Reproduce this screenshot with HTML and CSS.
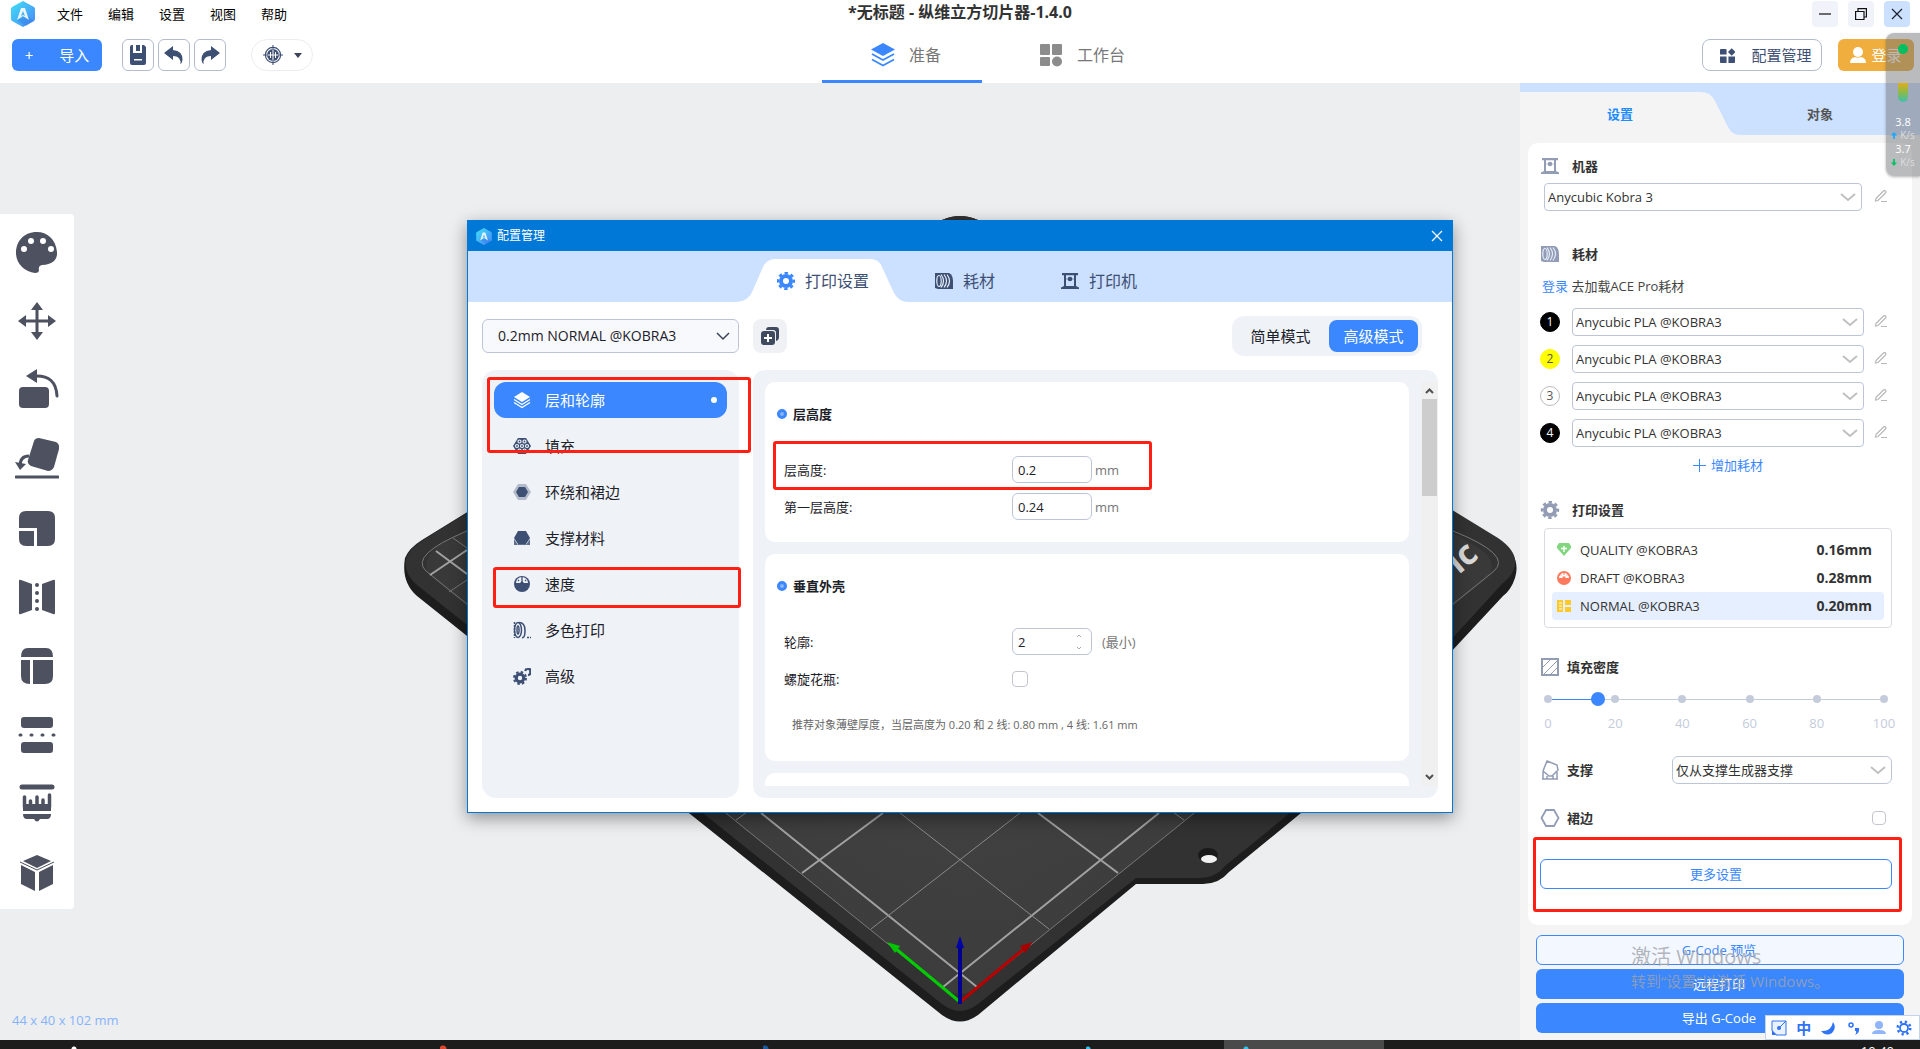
FILE: index.html
```html
<!DOCTYPE html>
<html lang="zh-CN">

<head>
    <meta charset="UTF-8" />
    <meta name="viewport" content="width=device-width, initial-scale=1.0" />
    <title>*无标题 - 纵维立方切片器-1.4.0</title>
    <link rel="stylesheet" href="styles.css">
</head>

<body>
    <!-- shared icons -->
    <svg class="sprite" aria-hidden="true">
        <defs>
            <linearGradient id="logoFill" x1="0" y1="0" x2="1" y2="1">
                <stop offset="0" stop-color="#3fe0f5" />
                <stop offset="1" stop-color="#4a86f7" />
            </linearGradient>
        </defs>
        <symbol id="i-logo" viewBox="0 0 24 26">
            <path d="M12 0l11 6q1 1 1 2v10q0 1-1 2l-11 6-11-6q-1-1-1-2V8q0-1 1-2z" fill="url(#logoFill)" />
            <path d="M16 15l7 5-8 5-9-6z" fill="#2f6fe0" opacity=".35" />
            <path d="M10 7h4l4 12-6-4-6 4z" fill="#e8f4ff" />
            <path d="M12 10l2 5-2-1-2 1z" fill="#43b4f0" />
        </symbol>
        <symbol id="i-gear" viewBox="0 0 18 18">
            <g fill="none" stroke="currentColor">
                <circle cx="9" cy="9" r="5" stroke-width="4" />
                <circle cx="9" cy="9" r="8" stroke-width="2.4" stroke-dasharray="3.4 2.883" stroke-dashoffset="1.7" />
            </g>
        </symbol>
        <symbol id="i-spool" viewBox="0 0 18 16">
            <path d="M0 0h14q4 2 4 8v8H3L0 15z" fill="currentColor" />
            <g fill="none" stroke="#e6eefc" stroke-width="1.200">
                <ellipse cx="4" cy="8" rx="2.200" ry="5.500" />
                <path d="M6 1.500q5 6.500 0 13M9 1.500q5 6.500 0 13M12 1.500q5 6.500 0 13" />
            </g>
        </symbol>
        <symbol id="i-machine" viewBox="0 0 18 16">
            <path d="M1 0h16v2.200h-2V13l3 1.500V16H0v-1.500L3 13V2.200H1zM5 2.200V13h8V2.200z" fill="currentColor" fill-rule="evenodd" />
            <path d="M5 6h8" stroke="currentColor" opacity=".5" />
            <circle cx="9" cy="6" r="2.300" fill="currentColor" />
        </symbol>
        <symbol id="i-edit" viewBox="0 0 14 14">
            <path d="M2 8.500L9.500 1q1-1 2 0t0 2L4 10.500l-2.500.5zM7 11.500h6" fill="none" stroke="currentColor" stroke-width="1.200" />
        </symbol>
        <symbol id="i-layers" viewBox="0 0 24 24">
            <path d="M12 0l12 6.500L12 13 0 6.500z" fill="currentColor" />
            <path d="M1 11l11 6 11-6M1 16.500l11 6 11-6" fill="none" stroke="currentColor" stroke-width="1.800" />
        </symbol>
        <symbol id="i-close" viewBox="0 0 12 12">
            <path d="M1 1l10 10M11 1L1 11" stroke="currentColor" stroke-width="1.200" />
        </symbol>
    </svg>

    <header class="header">
        <div class="titlebar">
            <nav class="menu">
                <svg class="app-logo"><use href="#i-logo" /></svg>
                <button>文件</button>
                <button>编辑</button>
                <button>设置</button>
                <button>视图</button>
                <button>帮助</button>
            </nav>
            <h1>*无标题 - 纵维立方切片器-1.4.0</h1>
            <div class="window-buttons">
                <button aria-label="最小化"><svg viewBox="0 0 12 12"><path d="M0 6h12" stroke="#111" stroke-width="1.200" /></svg></button>
                <button aria-label="还原"><svg viewBox="0 0 12 12"><path d="M.6 3.500h8.400v8H.6zM3 3.500V.6h8.400V9H9" fill="none" stroke="#111" stroke-width="1.200" /></svg></button>
                <button class="close" aria-label="关闭"><svg><use href="#i-close" /></svg></button>
            </div>
        </div>

        <div class="toolbar">
            <div class="tools">
                <button class="import"><span>+</span>导入</button>
                <div class="tool-group">
                    <button class="tool" aria-label="保存">
                        <svg viewBox="0 0 18 20"><path d="M1 2q0-2 2-2h1v8h9V0h2l2 2v16q0 2-2 2H3q-2 0-2-2zM7 0h4v6H7zM5 14v1.500h8V14z" fill="currentColor" fill-rule="evenodd" /></svg>
                    </button>
                    <button class="tool" aria-label="撤销">
                        <svg viewBox="0 0 20 18"><path d="M0 7L9 0v4q10 1 9.500 10-.5 3-2 4 .5-8-7.500-8v4z" fill="currentColor" /></svg>
                    </button>
                    <button class="tool" aria-label="重做">
                        <svg viewBox="0 0 20 18"><path d="M20 7L11 0v4Q1 5 1.500 14q.5 3 2 4-.5-8 7.500-8v4z" fill="currentColor" /></svg>
                    </button>
                </div>
                <button class="target" aria-label="视角">
                    <svg class="target-icon" viewBox="0 0 20 20">
                        <g fill="none" stroke="#3d4f73">
                            <circle cx="10" cy="10" r="7.600" stroke-width="1.200" />
                            <path d="M10 0v20M0 10h20" stroke-width="1" />
                        </g>
                        <circle cx="10" cy="10" r="6" fill="#3d4f73" />
                        <path d="M10 4.500v11M4.500 10h11M7.500 7v6M12.500 7v6" stroke="#fff" stroke-width="1" />
                    </svg>
                    <svg class="caret" viewBox="0 0 8 5"><path d="M0 0h8L4 5z" fill="#3d4458" /></svg>
                </button>
            </div>

            <nav class="main-tabs">
                <button class="main-tab active"><svg><use href="#i-layers" /></svg>准备</button>
                <button class="main-tab">
                    <svg viewBox="0 0 24 24"><path d="M2 1h8q1 0 1 1v9q0 1-1 1H2q-1 0-1-1V2q0-1 1-1zM14 1h8q1 0 1 1v9q0 1-1 1h-8q-1 0-1-1V2q0-1 1-1zM2 14h8q1 0 1 1v7q0 1-1 1H2q-1 0-1-1v-7q0-1 1-1z" fill="currentColor" /><circle cx="18" cy="18.500" r="5" fill="currentColor" /></svg>工作台
                </button>
            </nav>

            <div class="account">
                <button class="config">
                    <svg viewBox="0 0 16 16"><path d="M0 1.500Q0 1 1 1h5q1 0 1 1v5H0zM0 9h7v7H1q-1 0-1-1zM9 9h7v6q0 1-1 1H9zM12.500.2l4 4-4 4-4-4z" fill="currentColor" /></svg>配置管理
                </button>
                <button class="login">
                    <svg viewBox="0 0 16 16"><circle cx="8" cy="5" r="5" fill="#fff" /><path d="M0 16q0-5 5-6 3 1.500 6 0 5 1 5 6z" fill="#fff" /></svg>登录
                </button>
            </div>
        </div>
    </header>

    <main class="workspace">
        <svg class="scene" viewBox="0 83 1920 957" aria-hidden="true">
            <defs>
                <radialGradient id="bed" cx="960" cy="700" r="420" gradientUnits="userSpaceOnUse">
                    <stop offset="0" stop-color="#434343" />
                    <stop offset="1" stop-color="#393939" />
                </radialGradient>
            </defs>
            <path d="M942 220q18-8 36 0l520 320q24 16 17 38-4 12-12 18L1301 813l-72 59q-10 12-26 12h-67L978 1015q-18 13-36 0L417 596q-16-14-12-38 4-10 17-18z" fill="#1d1d1d" />
            <path d="M942 220q18-8 36 0l520 318q22 15 16 31-3 8-12 15L1301 804l-76 62q-9 12-26 12h-63L978 1004q-18 14-36 0L417 585q-14-12-11-27 4-10 17-18z" fill="#323232" />
            <path d="M960 240l520 309q16 10 10 27l-510 410q-20 16-40 0L430 576q-10-16 8-30z" fill="url(#bed)" />
            <g fill="none" stroke="#a2a2a2">
                <path d="M467 531q-58 24-41 40l514 415M1453 531q60 24 41 40l-514 415" stroke="#777" />
                <path d="M761 813l216 174M1159 813L943 987M802 873l81-60M1118 873l-80-60" stroke-width="2" />
                <path d="M900 813l149 116M1020 813L871 929M736 820l14-10M1184 820l-14-10" stroke="#8a8a8a" />
                <path d="M436 551l31 23M430 575l37-25" stroke-width="2" />
                <path d="M449 592l18-12M453 538l14 10" stroke="#777" />
            </g>
            <text class="bed-logo" transform="translate(1480 557) rotate(-40)" text-anchor="end">ic</text>
            <ellipse cx="1208" cy="855" rx="10" ry="7" fill="#191919" />
            <ellipse cx="1209" cy="859" rx="8" ry="4" fill="#f1f1f1" />
            <g stroke-width="3" fill="none">
                <path d="M960 1002l-65-54" stroke="#0c0" />
                <path d="M960 1002l65-54" stroke="#b80000" />
                <path d="M960 1004v-60" stroke="#000090" stroke-width="4" />
            </g>
            <path d="M887 942l13 4-5 7z" fill="#00c400" />
            <path d="M1033 942l-13 4 5 7z" fill="#a80000" />
            <path d="M960 936l4 12h-8z" fill="#0000a8" />
        </svg>

        <aside class="side-tools">
            <button aria-label="颜色"><svg viewBox="0 0 44 44"><path d="M22 2C8 2 1 12 1 23s9 19 19 20q4 0 4-3-1-4 3-5 16-1 15-13C41 9 32 2 22 2z" fill="currentColor" /><g fill="#fff"><circle cx="9" cy="19" r="3" /><circle cx="16" cy="11" r="3" /><circle cx="28" cy="11" r="3" /><circle cx="36" cy="19" r="3" /></g></svg></button>
            <button aria-label="移动"><svg viewBox="0 0 44 44"><path d="M22 3l6 8h-4.500v9.500H33V16l8 6-8 6v-4.500h-9.500V33H28l-6 8-6-8h4.500v-9.500H11V28l-8-6 8-6v4.500h9.500V11H16z" fill="currentColor" /></svg></button>
            <button aria-label="旋转"><svg viewBox="0 0 44 44"><rect x="4" y="19" width="30" height="21" rx="4" fill="currentColor" /><path d="M20 8q21-1 22 20" fill="none" stroke="currentColor" stroke-width="3" stroke-linecap="round" /><path d="M11 8l11-7v14z" fill="currentColor" /></svg></button>
            <button aria-label="放平"><svg viewBox="0 0 44 44"><path d="M19 4q1-3 5-3l17 4q4 2 3 7l-5 18q-2 4-6 4l-17-5q-4-2-3-6z" fill="currentColor" /><path d="M14 19q-9 0-9 10" fill="none" stroke="currentColor" stroke-width="3" /><path d="M0 25l11 2-6 6z" fill="currentColor" /><path d="M1 40h42" stroke="currentColor" stroke-width="3" stroke-linecap="round" /></svg></button>
            <button aria-label="缩放"><svg viewBox="0 0 44 44"><path d="M11 5h22q7 0 7 7v21q0 7-7 7H22V22H4V12q0-7 7-7zM4 25h15v15h-8q-7 0-7-7z" fill="currentColor" /></svg></button>
            <button aria-label="镜像"><svg viewBox="0 0 44 44"><path d="M4 6q0-2 2-1l11 4v26L6 39q-2 1-2-1zM40 6q0-2-2-1L27 9v26l11 4q2 1 2-1z" fill="currentColor" /><path d="M22 10v26" stroke="currentColor" stroke-width="4" stroke-dasharray="0 8" stroke-linecap="round" /></svg></button>
            <button aria-label="布局"><svg viewBox="0 0 44 44"><path d="M13 4h18q7 0 7 9H6q0-9 7-9zM6 16h9v24q-9 0-9-8zM18 16h20v16q0 8-8 8H18z" fill="currentColor" /></svg></button>
            <button aria-label="切割"><svg viewBox="0 0 44 44"><rect x="6" y="4" width="32" height="11" rx="3" fill="currentColor" /><rect x="6" y="29" width="32" height="11" rx="3" fill="currentColor" /><path d="M5 22h36" stroke="currentColor" stroke-width="3" stroke-linecap="round" stroke-dasharray="1 10" /></svg></button>
            <button aria-label="支撑绘制"><svg viewBox="0 0 44 44"><path d="M7 5h30" stroke="currentColor" stroke-width="5" stroke-linecap="round" /><path d="M9.500 15v10M15.500 19v6M22 15v10M28 18v7M34.500 13v12" stroke="currentColor" stroke-width="3.500" stroke-linecap="round" /><path d="M8 22h28v7H8zM8 32h28q0 5-4 5h-7q-3 5-6 0h-7q-4 0-4-5z" fill="currentColor" /></svg></button>
            <button aria-label="视图立方体"><svg viewBox="0 0 44 44"><path d="M22 4l14 6-14 7-14-7zM6 14l14 7v19L6 33zM38 14l-14 7v19l14-7z" fill="currentColor" /><path d="M5 11l17 8 17-8" stroke="currentColor" fill="none" /></svg></button>
        </aside>

        <p class="size-label">44 x 40 x 102 mm</p>

        <aside class="panel">
            <div class="panel-tabs">
                <button class="active">设置<svg viewBox="0 0 40 43" preserveAspectRatio="none"><path d="M0 0q11 0 15 9l13 26q4 8 12 8H0z" fill="#f4f4f4" /></svg></button>
                <button>对象</button>
            </div>

            <section class="card">
                <h2><svg class="h-icon"><use href="#i-machine" /></svg>机器</h2>
                <div class="machine-row">
                    <select aria-label="机器"><option>Anycubic Kobra 3</option></select>
                    <button class="edit" aria-label="编辑"><svg><use href="#i-edit" /></svg></button>
                </div>

                <h2 class="filament-title"><svg class="h-icon"><use href="#i-spool" /></svg>耗材</h2>
                <p class="ace"><a href="#">登录</a> 去加载ACE Pro耗材</p>
                <ul class="filaments">
                    <li>
                        <label class="slot black" for="f1">1</label>
                        <select id="f1"><option>Anycubic PLA @KOBRA3</option></select>
                        <button class="edit" aria-label="编辑"><svg><use href="#i-edit" /></svg></button>
                    </li>
                    <li>
                        <label class="slot yellow" for="f2">2</label>
                        <select id="f2"><option>Anycubic PLA @KOBRA3</option></select>
                        <button class="edit" aria-label="编辑"><svg><use href="#i-edit" /></svg></button>
                    </li>
                    <li>
                        <label class="slot" for="f3">3</label>
                        <select id="f3"><option>Anycubic PLA @KOBRA3</option></select>
                        <button class="edit" aria-label="编辑"><svg><use href="#i-edit" /></svg></button>
                    </li>
                    <li>
                        <label class="slot black" for="f4">4</label>
                        <select id="f4"><option>Anycubic PLA @KOBRA3</option></select>
                        <button class="edit" aria-label="编辑"><svg><use href="#i-edit" /></svg></button>
                    </li>
                </ul>
                <div class="add-row">
                    <button class="add"><svg viewBox="0 0 13 13"><path d="M6.500 0v13M0 6.500h13" stroke="currentColor" /></svg>增加耗材</button>
                </div>

                <h2 class="print-title"><svg class="h-icon gear"><use href="#i-gear" /></svg>打印设置</h2>
                <div class="profiles">
                    <button><svg viewBox="0 0 14 14"><path d="M2 0h10l2 3v2l-7 8-7-8V3z" fill="#82d67f" /><path d="M7 3v6M4 5.500h6" stroke="#fff" stroke-width="1.500" /></svg>QUALITY @KOBRA3<b>0.16mm</b></button>
                    <button><svg viewBox="0 0 14 14"><circle cx="7" cy="7" r="7" fill="#ff7a5c" /><path d="M2 7a5 5 0 0 1 10 0H8.500V5.500h-3V7z" fill="#fff" /><path d="M4 3.500v1M10 3.500v1M7 1v3" stroke="#ff7a5c" /></svg>DRAFT @KOBRA3<b>0.28mm</b></button>
                    <button class="active"><svg viewBox="0 0 14 14"><path d="M0 1h6v12H0zM8 1h6v5H8zM8 8h6v5H8z" fill="#ffca28" /><path d="M2 4h3M2 7h3M2 10h3" stroke="#fff" /></svg>NORMAL @KOBRA3<b>0.20mm</b></button>
                </div>

                <h2 class="fill-title tight">
                    <svg class="h-icon gear" viewBox="0 0 18 18"><path d="M1 1h16v16H1z" fill="none" stroke="currentColor" stroke-width="2" /><path d="M2 9l7-7M3 16L16 3M10 16l6-6" stroke="currentColor" /></svg><label for="density">填充密度</label>
                </h2>
                <div class="slider">
                    <div class="ticks"><i></i><i></i><i></i><i></i><i></i><i></i></div>
                    <input type="range" id="density" min="0" max="100" value="15">
                </div>
                <div class="scale"><span>0</span><span>20</span><span>40</span><span>60</span><span>80</span><span>100</span></div>

                <div class="support-row tight">
                    <svg class="h-icon support" viewBox="0 0 18 20"><path d="M6 1l10 4 1 5-6 6H8L2 11zM1 19h16M2 12v7M16 12v7M6 16v3M12 16v3" fill="none" stroke="currentColor" stroke-width="1.500" /></svg>
                    <label for="support">支撑</label>
                    <select id="support"><option>仅从支撑生成器支撑</option></select>
                </div>
                <div class="brim-row tight">
                    <svg class="h-icon gear" viewBox="0 0 18 18"><path d="M5 1h8l4.500 8L13 17H5L.5 9z" fill="none" stroke="currentColor" stroke-width="1.800" /></svg>
                    <label for="brim">裙边</label>
                    <input type="checkbox" id="brim">
                </div>
                <div class="more-row">
                    <button class="more">更多设置</button>
                    <span class="mark mark-more"></span>
                </div>
            </section>

            <div class="actions">
                <button class="outline">G-Code 预览</button>
                <button>远程打印</button>
                <button>导出 G-Code</button>
            </div>

            <div class="watermark">
                <strong>激活 Windows</strong>
                <span>转到“设置”以激活 Windows。</span>
            </div>
        </aside>

        <div class="dialog" role="dialog" aria-labelledby="dialog-title">
            <div class="dialog-title">
                <svg class="dialog-logo"><use href="#i-logo" /></svg>
                <span id="dialog-title">配置管理</span>
                <button aria-label="关闭"><svg><use href="#i-close" /></svg></button>
            </div>
            <nav class="dialog-tabs">
                <button class="active">
                    <svg class="tab-shape" viewBox="0 0 171 43"><path d="M0 43q12-1 16-12l10-23q4-8 12-8h95q9 0 12 8l12 26q5 9 14 9z" fill="#fff" /></svg>
                    <svg class="tab-icon blue"><use href="#i-gear" /></svg><span>打印设置</span>
                </button>
                <button><svg class="tab-icon"><use href="#i-spool" /></svg>耗材</button>
                <button><svg class="tab-icon"><use href="#i-machine" /></svg>打印机</button>
            </nav>

            <div class="dialog-bar">
                <select class="preset" aria-label="配置"><option>0.2mm NORMAL @KOBRA3</option></select>
                <button class="copy" aria-label="复制配置">
                    <svg viewBox="0 0 18 18"><path d="M5 3q0-3 3-3h7q3 0 3 3v7q0 3-3 4V6q0-3-3-3z" fill="#3f4a5f" /><rect y="4" width="14" height="14" rx="3" fill="#3f4a5f" /><path d="M7 7v8M3 11h8" stroke="#fff" stroke-width="2" /></svg>
                </button>
                <div class="mode">
                    <button>简单模式</button>
                    <button class="active">高级模式</button>
                </div>
            </div>

            <div class="dialog-body">
                <nav class="categories">
                    <button class="active"><svg viewBox="0 0 18 18"><path d="M9 1l8 5-8 5-8-5z" fill="currentColor" /><path d="M1 8.500l8 5 8-5M1 11.500l8 5 8-5" fill="none" stroke="currentColor" stroke-width="1.300" /></svg>层和轮廓<i></i></button>
                    <button><svg viewBox="0 0 18 18"><path d="M5 1h8l5 8-5 8H5L0 9z" fill="currentColor" /><g fill="none" stroke="#eff3f8" stroke-width="1.200"><circle cx="6.500" cy="4.500" r="1.500" /><circle cx="11.500" cy="4.500" r="1.500" /><circle cx="4" cy="9" r="1.500" /><circle cx="9" cy="9" r="1.500" /><circle cx="14" cy="9" r="1.500" /><circle cx="6.500" cy="13.500" r="1.500" /><circle cx="11.500" cy="13.500" r="1.500" /></g></svg>填充</button>
                    <button><svg viewBox="0 0 18 18"><path d="M5 1h8l5 8-5 8H5L0 9z" fill="#b4bccb" /><path d="M6 4h6l3 5-3 5H6L3 9z" fill="currentColor" /></svg>环绕和裙边</button>
                    <button><svg viewBox="0 0 18 18"><path d="M5 2h8l4 7-4 6H5L1 9z" fill="currentColor" /><path d="M1 10l4 6H1zM17 10l-4 6h4zM5 14h8v2H5z" fill="currentColor" opacity=".8" /></svg>支撑材料</button>
                    <button><svg viewBox="0 0 18 18"><circle cx="9" cy="9" r="8" fill="currentColor" /><path d="M3 8a6 6 0 0 1 12 0h-4L9 6 7 8z" fill="#eff3f8" /><path d="M9 2v7M5 5l1 1M13 5l-1 1" stroke="currentColor" stroke-width="1.300" /></svg>速度</button>
                    <button><svg viewBox="0 0 18 18"><g fill="none" stroke="currentColor" stroke-width="1.500"><ellipse cx="5" cy="9" rx="3.500" ry="7.500" /><ellipse cx="5" cy="9" rx="1" ry="4" /><path d="M6 1.500q6 0 6 8t-3 7" /><path d="M1.500 1v16M14 16.500h4" stroke-dasharray="2 1" /></g></svg>多色打印</button>
                    <button><svg viewBox="0 0 18 18"><g fill="none" stroke="currentColor"><circle cx="7" cy="11" r="3.800" stroke-width="3.200" /><circle cx="7" cy="11" r="6" stroke-width="2" stroke-dasharray="2.500 2.212" /><path d="M12 4a3 3 0 1 1 3 4" stroke-width="2" /><path d="M12 2l2 1M17 1v6" stroke-width="1.500" /></g></svg>高级</button>
                    <span class="mark mark-layers"></span>
                    <span class="mark mark-speed"></span>
                </nav>

                <div class="options">
                    <div class="option-list">
                        <fieldset>
                            <legend>层高度</legend>
                            <div class="field">
                                <label for="layer-height">层高度:</label>
                                <input type="text" id="layer-height" value="0.2">
                                <span>mm</span>
                                <span class="mark mark-height"></span>
                            </div>
                            <div class="field">
                                <label for="first-height">第一层高度:</label>
                                <input type="text" id="first-height" value="0.24">
                                <span>mm</span>
                            </div>
                        </fieldset>
                        <fieldset>
                            <legend>垂直外壳</legend>
                            <div class="field">
                                <label for="walls">轮廓:</label>
                                <input type="number" id="walls" value="2">
                                <span class="wide">(最小)</span>
                            </div>
                            <div class="field">
                                <label for="vase">螺旋花瓶:</label>
                                <input type="checkbox" id="vase">
                            </div>
                            <p class="note">推荐对象薄壁厚度，当层高度为 0.20 和 2 线: 0.80 mm , 4 线: 1.61 mm</p>
                        </fieldset>
                        <fieldset></fieldset>
                    </div>
                    <div class="scrollbar">
                        <svg viewBox="0 0 17 17"><path d="M5 11l3.500-3.500L12 11" fill="none" stroke="#505050" stroke-width="2" /></svg>
                        <div class="thumb"></div>
                        <svg class="down" viewBox="0 0 17 17"><path d="M5 6l3.500 3.500L12 6" fill="none" stroke="#505050" stroke-width="2" /></svg>
                    </div>
                </div>
            </div>
        </div>
    </main>

    <!-- network monitor widget -->
    <div class="netspeed">
        <i class="status"></i>
        <div class="meter"></div>
        <b>3.8</b>
        <small><svg class="up" viewBox="0 0 7 8"><path d="M3.500 0L7 4H4.500v4h-2V4H0z" fill="currentColor" /></svg>K/s</small>
        <b>3.7</b>
        <small><svg class="dn" viewBox="0 0 7 8"><path d="M3.500 8L7 4H4.500V0h-2v4H0z" fill="currentColor" /></svg>K/s</small>
    </div>

    <!-- input method bar -->
    <div class="ime">
        <svg viewBox="0 0 16 16"><path d="M1 1h14v14H5L1 11z" fill="#eaf2ff" stroke="currentColor" /><path d="M15 1L8 8" stroke="currentColor" /><circle cx="8" cy="8" r="2" fill="currentColor" /><path d="M1 10l5 5H1z" fill="currentColor" /></svg>
        <b>中</b>
        <svg viewBox="0 0 16 16"><path d="M13 2q4 6-1 11-6 4-11-2 10 1 12-9z" fill="currentColor" /></svg>
        <svg viewBox="0 0 16 16"><circle cx="5" cy="5" r="2" fill="none" stroke="currentColor" stroke-width="1.500" /><path d="M9 8h4q1 5-4 7 2-2 1-4H9z" fill="currentColor" /></svg>
        <svg class="pale" viewBox="0 0 16 16"><circle cx="8" cy="5" r="4" fill="currentColor" /><path d="M1 14q0-4 7-4t7 4z" fill="currentColor" /></svg>
        <svg viewBox="0 0 18 18"><circle cx="9" cy="9" r="4.500" fill="none" stroke="currentColor" stroke-width="2" /><circle cx="9" cy="9" r="7" fill="none" stroke="currentColor" stroke-width="3" stroke-dasharray="2.500 2.998" /></svg>
    </div>

    <footer class="taskbar">
        <i class="app white"></i>
        <i class="app red"></i>
        <i class="app navy"></i>
        <i class="app cyan"></i>
        <i class="app cyan current"></i>
        <time>10:40</time>
    </footer>
</body>

</html>
```

FILE: styles.css
```css
* {
    box-sizing: border-box;
}

html,
body {
    margin: 0;
    padding: 0;
}

body {
    position: relative;
    display: flex;
    flex-direction: column;
    min-height: 100vh;
    background: white;
    color: #1d2129;
    font-family: 'Open Sans', 'Noto Sans CJK SC', sans-serif;
    font-size: 13px;
    line-height: 18px;
    overflow: hidden;
}

button,
select,
input {
    font: inherit;
    color: inherit;
    margin: 0;
    padding: 0;
    border: none;
    background: none;
}

button {
    display: flex;
    align-items: center;
    justify-content: center;
    cursor: pointer;
    white-space: nowrap;
}

h1,
h2,
p,
ul {
    margin: 0;
    padding: 0;
    list-style: none;
}

svg {
    flex: none;
}

.sprite {
    position: absolute;
    width: 0;
    height: 0;
}

/* selects share one chevron */
select {
    appearance: none;
    border: 1px solid #bcc5d8;
    border-radius: 4px;
    background: white url("data:image/svg+xml,%3Csvg xmlns='http://www.w3.org/2000/svg' width='16' height='9'%3E%3Cpath d='M1 1l7 6 7-6' fill='none' stroke='%23c0c0c0' stroke-width='2'/%3E%3C/svg%3E") no-repeat right 5px center;
    height: 28px;
    padding: 0 24px 0 3px;
    color: #333;
}

input[type="checkbox"] {
    appearance: none;
    width: 16px;
    height: 16px;
    border: 1px solid #c3c6cf;
    border-radius: 4px;
    background: white;
}

/* header */
.titlebar {
    display: grid;
    grid-template-columns: 1fr auto 1fr;
    height: 28px;
}

.menu {
    display: flex;
    align-items: center;
    gap: 25px;
    padding-left: 11px;
    color: black;
}

.app-logo {
    width: 24px;
    height: 26px;
    margin-right: -3px;
}

h1 {
    font-size: 16px;
    line-height: 24px;
    color: #333;
}

.window-buttons {
    display: flex;
    justify-content: flex-end;
    gap: 10px;
    padding: 1px 10px 0 0;
}

.window-buttons button {
    width: 26px;
    height: 26px;
    border-radius: 4px;
    background: #f0f3fa;
}

.window-buttons .close {
    background: #cce0ff;
}

.window-buttons svg {
    width: 12px;
    height: 12px;
}

.toolbar {
    display: grid;
    grid-template-columns: 1fr auto 1fr;
    height: 55px;
}

.tools {
    display: flex;
    align-items: flex-start;
    gap: 20px;
    padding: 11px 0 0 12px;
}

.import {
    gap: 26px;
    width: 90px;
    height: 32px;
    border-radius: 6px;
    background: #3a87ff;
    color: white;
    font-size: 15px;
}

.tool-group {
    display: flex;
    gap: 4px;
}

.tool {
    width: 32px;
    height: 32px;
    border: 1px solid #b3bccd;
    border-radius: 6px;
    color: #3d4f73;
}

.tool svg {
    width: 20px;
    height: 20px;
}

.target {
    gap: 11px;
    width: 62px;
    height: 32px;
    margin-left: 5px;
    border: 1px solid #ecedf1;
    border-radius: 16px;
}

.target-icon {
    width: 20px;
    height: 20px;
}

.caret {
    width: 8px;
    height: 5px;
}

.main-tabs {
    display: flex;
    gap: 16px;
    padding-left: 60px;
}

.main-tab {
    gap: 14px;
    width: 160px;
    padding-left: 8px;
    padding-top: 2px;
    border-bottom: 3px solid transparent;
    color: #777;
    font-size: 16px;
}

.main-tab.active {
    border-color: #3a87ff;
}

.main-tab svg {
    width: 24px;
    height: 24px;
    color: #8c8c8c;
}

.main-tab.active svg {
    color: #3a87ff;
}

.account {
    display: flex;
    justify-content: flex-end;
    gap: 16px;
    padding: 11px 6px 0 0;
    font-size: 15px;
}

.config {
    gap: 16px;
    width: 120px;
    height: 32px;
    padding-left: 8px;
    border: 1px solid #b3bccd;
    border-radius: 8px;
    color: #3d4f73;
}

.config svg {
    width: 15px;
    height: 15px;
}

.login {
    gap: 5px;
    width: 76px;
    height: 32px;
    border-radius: 6px;
    background: #f0ae3e;
    color: white;
}

.login svg {
    width: 16px;
    height: 16px;
}

/* workspace */
.workspace {
    position: relative;
    flex: 1;
    display: flex;
    justify-content: space-between;
    background: #edeef0;
}

.scene {
    position: absolute;
    inset: 0;
    width: 100%;
    height: 100%;
}

.bed-logo {
    font-size: 34px;
    font-weight: bold;
    fill: #d8d8d8;
}

.side-tools {
    position: relative;
    align-self: center;
    display: flex;
    flex-direction: column;
    gap: 25px;
    width: 74px;
    padding: 16px 15px 14px;
    border-radius: 0 4px 4px 0;
    background: white;
    color: #4d5160;
}

.side-tools svg {
    width: 44px;
    height: 44px;
}

.size-label {
    position: absolute;
    left: 12px;
    bottom: 11px;
    color: #86b4fb;
}

/* right panel */
.panel {
    position: relative;
    width: 400px;
    background: #f4f4f4;
}

.panel-tabs {
    display: flex;
    padding-top: 9px;
    background: #cce0ff;
    font-weight: bold;
    color: #555;
}

.panel-tabs button {
    position: relative;
    flex: 1;
    height: 43px;
}

.panel-tabs .active {
    background: linear-gradient(#f4f4f4, #f4f4f4) no-repeat;
    background-size: calc(100% - 20px) 100%;
    color: #1c8cff;
}

.panel-tabs svg {
    position: absolute;
    top: 0;
    right: -20px;
    width: 40px;
    height: 43px;
}

.card {
    margin: 8px 8px 0;
    padding: 14px 20px 36px 12px;
    border-radius: 10px;
    background: white;
}

h2 {
    display: flex;
    align-items: center;
    gap: 12px;
    font-size: 13px;
    font-weight: bold;
    color: #333;
}

.h-icon {
    width: 20px;
    height: 16px;
    color: #929cb4;
}

.h-icon.gear {
    height: 18px;
}

.h-icon.support {
    height: 20px;
}

h2.tight,
.tight {
    gap: 7px;
}

.machine-row {
    display: flex;
    align-items: center;
    gap: 12px;
    margin-top: 8px;
    padding: 0 4px;
}

.machine-row select,
.filaments select {
    flex: 1;
    min-width: 0;
}

.edit {
    color: #b9b9b9;
}

.edit svg {
    width: 14px;
    height: 14px;
}

.filament-title {
    margin-top: 34px;
}

.ace {
    margin-top: 14px;
    padding-left: 2px;
    color: #444;
}

.ace a {
    color: #3a87ff;
    text-decoration: none;
}

.filaments {
    display: flex;
    flex-direction: column;
    gap: 9px;
    margin-top: 13px;
}

.filaments li {
    display: flex;
    align-items: center;
    gap: 10px;
    padding-right: 4px;
}

.slot {
    width: 20px;
    margin-right: 2px;
    border: 1px solid #bbb;
    border-radius: 50%;
    color: #555;
    font-size: 12px;
    text-align: center;
}

.slot.black {
    border-color: black;
    background: black;
    color: white;
}

.slot.yellow {
    border-color: yellow;
    background: yellow;
}

.add-row {
    display: flex;
    justify-content: center;
    margin-top: 9px;
    padding: 0 8px 0 32px;
}

.add {
    gap: 5px;
    color: #3a87ff;
}

.add svg {
    width: 13px;
    height: 13px;
}

.print-title {
    margin-top: 27px;
}

.profiles {
    margin: 9px 0 0 4px;
    padding: 7px;
    border: 1px solid #d9dbe0;
    border-radius: 4px;
}

.profiles button {
    justify-content: flex-start;
    gap: 9px;
    width: 100%;
    height: 28px;
    padding: 0 12px 0 5px;
    border-radius: 4px;
    color: #333;
}

.profiles .active {
    background: #e6efff;
}

.profiles svg {
    width: 14px;
    height: 14px;
}

.profiles b {
    margin-left: auto;
    font-size: 14px;
}

.fill-title {
    margin-top: 30px;
}

.slider {
    position: relative;
    margin-top: 13px;
    padding: 6px 4px;
}

.ticks {
    display: flex;
    justify-content: space-between;
}

.ticks i {
    width: 8px;
    height: 8px;
    border-radius: 50%;
    background: #c4ccdb;
}

/* the range lies over the tick dots */
.slider input {
    appearance: none;
    position: absolute;
    inset: 0;
    width: 100%;
    height: 20px;
    background: linear-gradient(to right, #3a87ff 15%, #c4ccdb 15%) no-repeat center;
    background-size: calc(100% - 24px) 1px;
}

.slider input::-webkit-slider-thumb {
    appearance: none;
    width: 14px;
    height: 14px;
    border-radius: 50%;
    background: #3a87ff;
}

.scale {
    display: flex;
    justify-content: space-between;
    margin: 5px -4px 0;
    color: #c4ccdb;
}

.scale span {
    width: 24px;
    text-align: center;
}

.support-row,
.brim-row {
    display: flex;
    align-items: center;
    font-weight: bold;
    color: #333;
}

.support-row {
    margin-top: 24px;
}

.support-row select {
    width: 220px;
    margin-left: auto;
    border-radius: 6px;
    font-weight: normal;
}

.brim-row {
    height: 20px;
    margin-top: 24px;
}

.brim-row input {
    width: 14px;
    height: 14px;
    margin: 0 6px 0 auto;
}

.more-row {
    position: relative;
    margin-top: 31px;
}

.more {
    width: 100%;
    height: 30px;
    border: 1px solid #3a87ff;
    border-radius: 6px;
    color: #3a87ff;
}

.actions {
    display: flex;
    flex-direction: column;
    gap: 4px;
    padding: 10px 16px 7px;
}

.actions button {
    height: 30px;
    padding-right: 2px;
    border-radius: 6px;
    background: #3a87ff;
    color: white;
}

.actions .outline {
    border: 1px solid #3a87ff;
    background: #f3f7ff;
    color: #3a87ff;
}

.watermark {
    position: absolute;
    left: 111px;
    bottom: 49px;
    display: flex;
    flex-direction: column;
    color: rgba(160, 163, 170, 0.8);
    font-size: 15px;
    line-height: 20px;
    pointer-events: none;
}

.watermark strong {
    font-size: 20px;
    font-weight: normal;
    line-height: 28px;
}

/* red highlight frames */
.mark {
    position: absolute;
    border: 3px solid #ff1f13;
    border-radius: 3px;
    pointer-events: none;
}

.mark-more {
    inset: -22px -10px -23px -7px;
}

.mark-layers {
    top: 7px;
    left: 5px;
    right: -12px;
    height: 76px;
}

.mark-speed {
    top: 197px;
    left: 11px;
    right: -2px;
    height: 41px;
}

.mark-height {
    top: -15px;
    left: -11px;
    width: 379px;
    height: 49px;
}

/* settings dialog */
.dialog {
    position: absolute;
    top: 137px;
    left: 50%;
    display: flex;
    flex-direction: column;
    width: 986px;
    max-width: 90vw;
    transform: translateX(-50%);
    border: 1px solid #0078d7;
    background: white;
    box-shadow: 0 5px 16px rgba(0, 0, 0, 0.4);
}

.dialog-title {
    display: flex;
    align-items: center;
    gap: 5px;
    height: 30px;
    padding: 0 9px 0 8px;
    background: #0078d7;
    color: white;
    font-size: 12px;
}

.dialog-logo {
    width: 16px;
    height: 17px;
}

.dialog-title button {
    margin-left: auto;
}

.dialog-title button svg {
    width: 12px;
    height: 12px;
}

.dialog-tabs {
    display: flex;
    justify-content: center;
    gap: 66px;
    height: 51px;
    padding: 8px 6px 0 0;
    background: #cce0ff;
    color: #3d4f73;
    font-size: 16px;
}

.dialog-tabs button {
    position: relative;
    gap: 10px;
}

.tab-shape {
    position: absolute;
    left: -40px;
    top: 0;
    width: 171px;
    height: 43px;
}

.tab-icon {
    position: relative;
    width: 18px;
    height: 18px;
}

.tab-icon.blue {
    color: #3a87ff;
}

.dialog-tabs span {
    position: relative;
}

.dialog-bar {
    display: flex;
    align-items: center;
    gap: 14px;
    padding: 14px 30px 14px 14px;
}

.preset {
    width: 257px;
    height: 34px;
    padding-left: 15px;
    border-radius: 6px;
    background: #f7f9fd url("data:image/svg+xml,%3Csvg xmlns='http://www.w3.org/2000/svg' width='14' height='9'%3E%3Cpath d='M1 1l6 6 6-6' fill='none' stroke='%233d4458' stroke-width='1.500'/%3E%3C/svg%3E") no-repeat right 8px center;
    color: #1d2129;
    font-size: 14px;
}

.copy {
    width: 34px;
    height: 34px;
    border-radius: 8px;
    background: #f0f1f5;
}

.copy svg {
    width: 18px;
    height: 18px;
}

.mode {
    display: flex;
    gap: 4px;
    margin-left: auto;
    padding: 4px;
    border-radius: 12px;
    background: #eff3f8;
    font-size: 15px;
}

.mode button {
    width: 89px;
    height: 32px;
    border-radius: 8px;
}

.mode .active {
    background: #3a87ff;
    color: white;
}

.dialog-body {
    display: flex;
    gap: 14px;
    padding: 0 14px 14px;
}

.categories {
    position: relative;
    display: flex;
    flex-direction: column;
    gap: 10px;
    width: 257px;
    padding: 12px;
    border-radius: 14px;
    background: #eff3f8;
    font-size: 15px;
}

.categories button {
    justify-content: flex-start;
    gap: 14px;
    height: 36px;
    padding: 0 10px 0 19px;
    border-radius: 12px;
}

.categories .active {
    background: #3a87ff;
    color: white;
}

.categories svg {
    width: 18px;
    height: 18px;
    color: #3d4f73;
}

.categories .active svg {
    color: white;
}

.categories i {
    width: 6px;
    height: 6px;
    margin-left: auto;
    border-radius: 50%;
    background: white;
}

.options {
    flex: 1;
    display: flex;
    gap: 12px;
    height: 428px;
    padding: 12px 0 12px 12px;
    border-radius: 12px;
    background: #eff3f8;
}

.option-list {
    flex: 1;
    display: flex;
    flex-direction: column;
    gap: 12px;
    overflow: hidden;
}

fieldset {
    flex: none;
    margin: 0;
    padding: 22px 12px;
    border: none;
    border-radius: 10px;
    background: white;
}

legend {
    float: left;
    display: flex;
    align-items: center;
    gap: 6px;
    width: 100%;
    margin-bottom: 32px;
    padding: 0;
    line-height: 20px;
    font-weight: bold;
}

legend::before {
    content: "";
    box-sizing: border-box;
    width: 10px;
    height: 10px;
    border: 3px solid #3a87ff;
    border-radius: 50%;
    background: #86b4fb;
}

.field {
    clear: both;
    position: relative;
    display: flex;
    align-items: center;
    gap: 3px;
    height: 27px;
    margin: 0 0 10px 7px;
}

.field:last-child {
    margin-bottom: 0;
}

.field label {
    width: 225px;
}

.field input[type="text"],
.field input[type="number"] {
    width: 80px;
    height: 27px;
    padding: 0 5px;
    border: 1px solid #bcc5d8;
    border-radius: 6px;
}

.field input[type="number"] {
    appearance: textfield;
    background: url("data:image/svg+xml,%3Csvg xmlns='http://www.w3.org/2000/svg' width='6' height='16'%3E%3Cpath d='M1 3l2-2 2 2M1 13l2 2 2-2' fill='none' stroke='%23aaa'/%3E%3C/svg%3E") no-repeat right 9px center;
}

.field input::-webkit-inner-spin-button {
    appearance: none;
}

.field span {
    color: #777;
}

.field .wide {
    padding-left: 7px;
}

.note {
    margin: 24px 0 5px 15px;
    color: #666;
    font-size: 11px;
}

.scrollbar {
    display: flex;
    flex-direction: column;
    width: 17px;
    background: #f0f0f0;
}

.scrollbar svg {
    width: 17px;
    height: 17px;
}

.scrollbar .down {
    margin-top: auto;
}

.thumb {
    height: 97px;
    margin: 0 1px;
    background: #cdcdcd;
}

/* desktop overlays */
.netspeed {
    position: absolute;
    top: 33px;
    right: 0;
    display: flex;
    flex-direction: column;
    align-items: center;
    width: 34px;
    padding: 11px 0 8px;
    border-radius: 8px 0 0 8px;
    background: rgba(110, 112, 118, 0.48);
    box-shadow: 0 1px 3px rgba(0, 0, 0, 0.3);
    color: white;
    font-size: 11px;
    line-height: 15px;
}

.netspeed .status {
    width: 10px;
    height: 10px;
    border-radius: 50%;
    background: #00bf63;
}

.meter {
    width: 10px;
    height: 30px;
    margin: 18px 0 12px;
    border-radius: 5px;
    background: linear-gradient(#bbb 36%, #dfae1c 37%, #93b943 65%, #3cc1ad);
}

.netspeed b {
    font-weight: normal;
}

.netspeed small {
    display: flex;
    align-items: center;
    gap: 3px;
    font-size: 10px;
    line-height: 12px;
    color: #ddd;
}

.netspeed svg {
    width: 6px;
    height: 7px;
}

.up {
    color: #1aa7ff;
}

.dn {
    color: #00bf63;
}

.ime {
    position: absolute;
    right: 0;
    bottom: 9px;
    display: flex;
    align-items: center;
    justify-content: space-between;
    width: 155px;
    height: 25px;
    padding: 0 7px 0 5px;
    border: 1px solid #c3d3ee;
    background: white;
    color: #2f73f6;
    font-size: 15px;
}

.ime svg {
    width: 16px;
    height: 16px;
}

.ime .pale {
    color: #8fb5fa;
}

.taskbar {
    display: grid;
    grid-template-columns: 440px 323px 323px 138px 160px 1fr;
    height: 9px;
    overflow: hidden;
    background: #1c1c1c;
    color: white;
}

.app {
    height: 9px;
    background: radial-gradient(circle at 74px 9px, currentColor 2px, transparent 3px);
}

.app.red {
    color: #e0452f;
    background: radial-gradient(circle at 3px 9px, currentColor 3px, transparent 4px);
}

.app.navy {
    color: #1c5a9c;
    background: radial-gradient(circle at 2px 9px, currentColor 3px, transparent 4px);
}

.app.cyan {
    color: #35c3f0;
    background: radial-gradient(circle at 2px 9px, currentColor 2px, transparent 3px);
}

.app.current {
    background: radial-gradient(circle at 22px 9px, currentColor 2px, transparent 3px) #4a4a4a;
}

.taskbar time {
    padding: 2px 26px 0 0;
    text-align: right;
}
```
